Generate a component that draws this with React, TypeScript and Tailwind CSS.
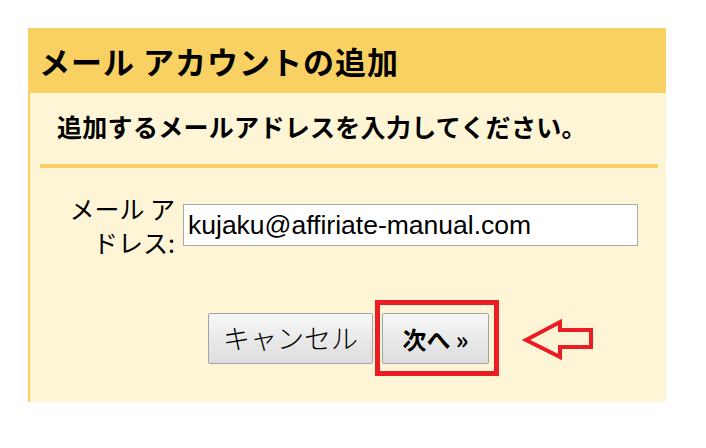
const jp = "font-['Noto_Sans_CJK_JP','Noto_Sans',sans-serif]";

function HollowArrow() {
  return (
    <svg
      className="pointer-events-none absolute left-[492px] top-[288px]"
      width="78"
      height="48"
      viewBox="0 0 78 48"
      aria-hidden
    >
      <polygon
        points="6,24 40,6 40,14 71,14 71,31 40,31 40,41"
        fill="none"
        stroke="#ec1c24"
        strokeWidth="4"
        strokeLinejoin="miter"
      />
    </svg>
  );
}

export default function App() {
  return (
    <div className="min-h-[448px] w-[706px] bg-white pl-[28px] pt-[28px]">
      <div className="relative w-[638px]">
        {/* title bar */}
        <div className="flex h-[65px] items-center bg-[#f9d162] pl-[11px]">
          <h1 className={`${jp} text-[31px] font-bold leading-none tracking-[1px] text-black`}>
            メール アカウントの追加
          </h1>
        </div>

        {/* body */}
        <div className="border-l-2 border-[#f9d162] bg-[#fef5d7] pb-[38px] pl-[10px] pr-[8px] pt-[15px]">
          <p className={`${jp} pl-[17px] text-[25px] font-bold leading-[36px] tracking-[0.3px] text-black`}>
            追加するメールアドレスを入力してください。
          </p>
          <div className="mt-[20px] h-[4px] bg-[#f9d162]" />

          <div className="mt-[23px] flex items-center gap-[8px]">
            <label
              htmlFor="email"
              className={`${jp} w-[135px] text-right text-[25px] leading-[34px] text-black`}
            >
              メール ア
              <br />
              ドレス:
            </label>
            <input
              id="email"
              readOnly
              value="kujaku@affiriate-manual.com"
              className="h-[42px] w-[455px] border border-[#a9a9a9] bg-white pl-[4px] font-['Liberation_Sans',Arial,sans-serif] text-[26.5px] text-black outline-none"
            />
          </div>

          <div className="mt-[54px] flex gap-[9px] pl-[168px]">
            <button
              className={`${jp} h-[51px] w-[165px] rounded-[2px] border border-[#a3a3a3] bg-gradient-to-b from-[#f7f7f7] to-[#dddddd] text-[27px] font-light text-black`}
            >
              キャンセル
            </button>
            <button
              className={`${jp} h-[51px] w-[107px] rounded-[2px] border border-[#a3a3a3] bg-gradient-to-b from-[#f7f7f7] to-[#dddddd] text-[24px] font-bold text-black`}
            >
              次へ »
            </button>
          </div>
        </div>

        {/* annotation */}
        <div className="pointer-events-none absolute left-[347px] top-[272px] h-[76px] w-[124px] border-[5px] border-[#ec1c24]" />
        <HollowArrow />
      </div>
    </div>
  );
}
